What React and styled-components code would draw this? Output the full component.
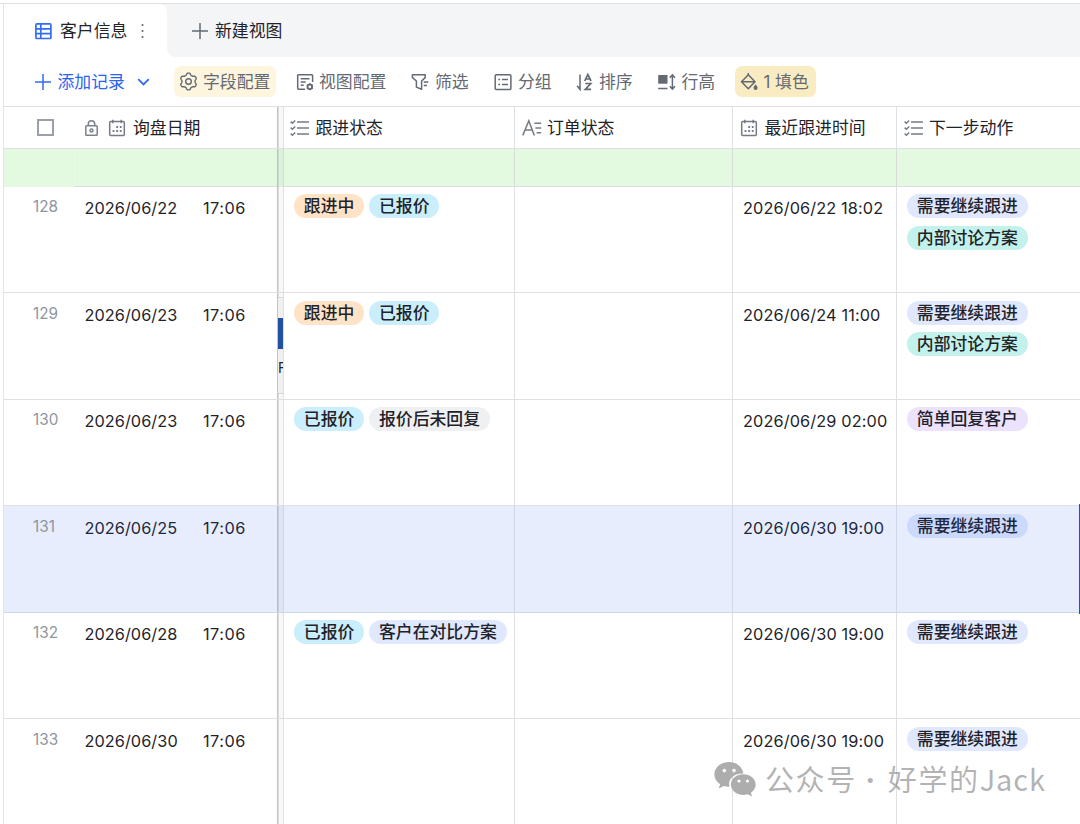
import React from 'react';
import styled, { createGlobalStyle, css } from 'styled-components';

const Global = createGlobalStyle`
  * { box-sizing: border-box; }
  html, body { margin: 0; padding: 0; background: #fff; }
  body {
    width: 1080px; height: 824px; overflow: hidden;
    font-family: Inter, "Noto Sans CJK SC", sans-serif;
    font-size: 16.85px; color: #1f2329;
  }
`;

const Page = styled.div`
  position: relative;
  width: 1080px;
  height: 824px;
  padding: 3px 0 0 3px;
  overflow: hidden;
`;
const Panel = styled.div`
  height: 821px;
  border-left: 1px solid #e3e4e6;
  display: flex;
  flex-direction: column;
`;
const TopLine = styled.div`
  height: 1px;
  margin-left: -4px;
  flex: none;
  background: #dfe0e2;
`;
const TabBar = styled.div`
  display: flex;
  height: 53px;
  flex: none;
  background: #f4f5f7;
`;
const iconText = css`
  padding-bottom: 2px;
  & > svg { margin-top: 2px; }
`;
const ActiveTab = styled.div`
  display: flex;
  align-items: center;
  width: 163px;
  padding-left: 30px;
  background: #fff;
  border-radius: 0 8px 0 0;
  ${iconText}
  span { margin-left: 8px; }
  svg:last-child { margin-left: 8px; }
`;
const NewTab = styled.div`
  display: flex;
  align-items: center;
  flex: 1;
  padding-left: 24px;
  background: #f4f5f7;
  position: relative;
  ${iconText}
  span { margin-left: 6px; }
  &::before {
    content: "";
    position: absolute;
    left: 0;
    bottom: 0;
    width: 8px;
    height: 8px;
    background: radial-gradient(circle at 8px 0, transparent 7.5px, #fff 8px);
  }
`;
const Toolbar = styled.div`
  display: flex;
  align-items: center;
  height: 49px;
  flex: none;
  padding-left: 30px;
  color: #646a73;
`;
const Tool = styled.div`
  display: flex;
  align-items: center;
  flex: none;
  gap: ${(p) => p.$gap ?? 5}px;
  width: ${(p) => p.$w}px;
  height: 31px;
  padding-left: ${(p) => (p.$bg ? 5 : 0)}px;
  margin-left: ${(p) => p.$ml || 0}px;
  border-radius: 7px;
  background: ${(p) => p.$bg || 'transparent'};
  color: ${(p) => p.$color || 'inherit'};
  white-space: nowrap;
  ${iconText}
`;

const columns = '273px 7px 231px 218px 164px 1fr';
const line = '#dee0e3';

const HeaderRow = styled.div`
  display: grid;
  grid-template-columns: ${columns};
  height: 43px;
  flex: none;
  border-top: 1px solid ${line};
  border-bottom: 1px solid ${line};
`;
const HeaderCell = styled.div`
  display: flex;
  align-items: center;
  padding-left: ${(p) => p.$pl}px;
  gap: ${(p) => p.$gap ?? 5}px;
  color: #1f2329;
  border-right: ${(p) => (p.$last ? 0 : 1)}px solid ${line};
  white-space: nowrap;
  ${iconText}
`;
const FrozenHeader = styled(HeaderCell)`
  border-right: 0;
  gap: 0;
`;
const Box = styled.div`
  width: 17px;
  height: 17px;
  border: 2px solid #9ba0a8;
  margin: 2px 30px 0 0;
`;
const Divider = styled.div`
  border-left: 1px solid #c2c3c6;
  border-right: 1px solid ${line};
  background: linear-gradient(90deg, #dcdddf 1px, #f8f8f9 1px);
  position: relative;
`;
const GroupRow = styled.div`
  display: grid;
  grid-template-columns: ${columns};
  height: 37.9px;
  flex: none;
  background: #e3f9e0;
`;
const GroupCell = styled.div`
  border-bottom: 1px solid #d9dde0;
  border-right: 1px solid #d5dfd8;
  margin-left: ${(p) => p.$indent || 0}px;
  &:last-child { border-right: 0; }
  ${(p) => p.$first && css`border-right: 0; border-left: 1px solid #e9fae7;`}
`;
const GroupDivider = styled(Divider)`
  background: linear-gradient(90deg, #cbdccb 1px, #def1dc 1px);
  border-left-color: #b5c6b6;
  border-right-color: #d0ddd1;
`;
const Cell = styled.div`
  display: flex;
  flex-wrap: wrap;
  align-content: flex-start;
  gap: 7.6px 5px;
  padding: 7.5px 0 0 10px;
  border-right: 1px solid ${line};
  overflow: hidden;
  &:last-child { border-right: 0; }
`;
const Row = styled.div`
  display: grid;
  grid-template-columns: ${columns};
  height: 106.5px;
  flex: none;
  background: ${(p) => (p.$selected ? '#e7edfd' : '#fff')};
  border-bottom: 1px solid ${(p) => (p.$selected ? '#ccd7ea' : line)};
  ${(p) => p.$selected && css`
    color: #1d2740;
    ${Divider} {
      background: linear-gradient(90deg, #c8d0e2 1px, #dfe5f5 1px);
      border-left-color: #b3bccf;
      border-right-color: #cdd6e8;
    }
    ${Cell} { border-right-color: #cfd8ea; }
  `}
`;
const Frozen = styled.div`
  display: grid;
  grid-template-columns: 80.4px 118.6px 1fr;
`;
const Num = styled.div`
  padding: 10.3px 0 0 29px;
  font-size: 15.3px;
  line-height: 20px;
  color: #8f959e;
`;
const Stamp = styled.div`
  padding-top: 11.6px;
  line-height: 20px;
  font-size: 16.3px;
  letter-spacing: ${(p) => p.$ls ?? 0.07}px;
  white-space: nowrap;
`;
const TimeCell = styled(Cell)`
  padding-top: 0;
`;
const tones = {
  orange: '#fee3c7',
  cyan: '#caeefc',
  gray: '#eff0f1',
  indigo: '#e0e8ff',
  teal: '#c2f2eb',
  purple: '#ece2fe',
  active: '#cad9fc',
};
const Tag = styled.span`
  height: 24px;
  line-height: 24px;
  padding: 0 9.8px;
  border-radius: 12px;
  font-weight: 500;
  white-space: nowrap;
  background: ${(p) => tones[p.$tone]};
`;
const Thumb = styled.div`
  position: absolute;
  left: 0;
  top: 4px;
  width: 5px;
  height: 97px;
  overflow: hidden;
  background: #f0f0f1;
  border: solid #d5d6d8;
  border-width: 1px 0;
  padding-top: 20px;
  font-size: 14px;
  line-height: 38px;
  &::before {
    content: "";
    display: block;
    width: 5px;
    height: 31px;
    background: #2450a4;
  }
`;
const Remote = styled.div`
  position: absolute;
  right: 0;
  top: 504px;
  width: 1px;
  height: 110px;
  background: #1f4fd0;
`;
const Watermark = styled.div`
  position: absolute;
  left: 714px;
  top: 756px;
  display: flex;
  align-items: center;
  height: 44px;
  color: rgba(120, 120, 120, 0.56);
  font-family: "Noto Sans CJK SC", sans-serif;
  font-weight: 400;
  font-size: 29px;
  white-space: nowrap;
  svg { margin-top: 2px; }
`;
const Mark = styled.span`
  letter-spacing: ${(p) => p.$ls}px;
  margin-left: ${(p) => p.$ml || 0}px;
`;
const MarkDot = styled.span`
  width: 27px;
  text-align: center;
  font-size: 24px;
`;

const Svg = ({ s = 18, w = s, c = '#646a73', sw = 1.5, children }) => (
  <svg width={w} height={s} viewBox={`0 0 ${w} ${s}`} fill="none" stroke={c} strokeWidth={sw} style={{ flex: 'none' }}>
    {children}
  </svg>
);
const GridIcon = () => (
  <Svg c="#336df4" sw={1.7}>
    <rect x="1.9" y="1.9" width="15" height="14.6" rx="1" />
    <path d="M6.8 2v14.4M2 6.8h15M2 11.7h15" />
  </Svg>
);
const Plus = ({ c = '#646a73' }) => (
  <Svg s={18} c={c}><path d="M9 1v16M1 9h16" /></Svg>
);
const Dots = () => (
  <svg width="16" height="18" fill="#646a73"><circle cx="7.5" cy="3" r="1.1" /><circle cx="7.5" cy="9" r="1.1" /><circle cx="7.5" cy="15" r="1.1" /></svg>
);
const gearPath = Array.from({ length: 96 }, (_, i) => {
  const a = (i * Math.PI) / 48;
  const r = 7.5 + 0.95 * Math.tanh(1.8 * Math.cos(6 * a));
  return `${i ? 'L' : 'M'}${(9.5 + r * Math.sin(a)).toFixed(2)} ${(9.5 - r * Math.cos(a)).toFixed(2)}`;
}).join('') + 'Z';
const Gear = () => (
  <Svg s={19} sw={1.4}>
    <path strokeLinejoin="round" d={gearPath} />
    <circle cx="9.5" cy="9.5" r="2.8" />
  </Svg>
);
const ViewConfig = () => (
  <Svg>
    <path d="M16.6 9V2.6a.9.9 0 0 0-.9-.9H2.6a.9.9 0 0 0-.9.9v12.7c0 .5.4.9.9.9H9M4.7 5.7h8.8M4.7 9h5M4.7 12.3h3" />
    <circle cx="13.8" cy="13.8" r="2.3" strokeWidth="1.8" />
    <path d="M13.8 10.3v1.2M13.8 16.1v1.2M10.8 12l1 .7M16 14.9l1 .6M16.8 12l-1 .7M11.8 14.9l-1 .6" strokeWidth="1.3" />
  </Svg>
);
const Filter = () => (
  <Svg><path strokeLinejoin="round" d="M1.4 1.8h12.8v2.8L10.6 8v8.3l-5.2-2.2V8L1.4 4.6zM12.7 9h4.6M12.7 12.4h3.3" /></Svg>
);
const Group = () => (
  <Svg><rect x="1.2" y="1.8" width="15.7" height="14.6" rx="1" /><path d="M4.3 6.5h1.9M8 6.5h6M4.3 11.5h1.9M8 11.5h6" /></Svg>
);
const Sort = () => (
  <Svg>
    <path d="M4 1.5V16.5L1.2 12.8" />
    <path d="M8.7 8 L11.8 1.5 L15 8M9.8 6h4M9.3 10.5h5.4L9.3 16.3h5.8" strokeWidth="1.7" />
  </Svg>
);
const RowHeight = () => (
  <Svg w={20}>
    <path d="M1.2 2h9.3v8.7H1.2z" fill="#646a73" stroke="none" />
    <path d="M1.2 15.5h9.3M15.4 2v14M12.8 4.7l2.6-2.8L18 4.7M12.8 13.3l2.6 2.8 2.6-2.8" />
  </Svg>
);
const Bucket = () => (
  <Svg w={19}>
    <path strokeLinejoin="round" d="M8.3 1.7 L15 8.8 L8.3 15.7 L1.5 8.8 Z M2 8.8H15M8.3 1.7V0" />
    <path d="M15.6 11.2c1.3 1.8 2 2.6 2 3.7a2 2 0 0 1-4 0c0-1.1.7-1.9 2-3.7z" fill="#646a73" stroke="none" />
  </Svg>
);
const Chevron = () => (
  <Svg w={14} s={10} c="#336df4" sw={1.9}><path d="M1.2 2.2l5.3 5.3 5.3-5.3" /></Svg>
);
const Lock = () => (
  <Svg w={15} c="#7b818a">
    <rect x="1.8" y="6.8" width="11.4" height="9.4" rx=".8" />
    <path d="M4.3 6.5V5a3.2 3.2 0 0 1 6.4 0v1.5" /><circle cx="7.5" cy="11.4" r="1.5" />
  </Svg>
);
const Calendar = () => (
  <Svg c="#757b84">
    <rect x="1.7" y="2.5" width="14.6" height="13.9" rx="1" />
    <path d="M4.8 .8v3.4M13.2 .8v3.4" />
    <path d="M8.2 8h1.8M11.8 8h1.8M4.6 12h1.8M8.2 12h1.8M11.8 12h1.8" strokeWidth="1.8" />
  </Svg>
);
const Checks = () => (
  <Svg w={19} c="#757b84">
    <path d="M7 3h12M7 9h12M7 15h12" />
    <path d="M.7 2.6 2.4 4.3 5.2 1.4M.7 8.6l1.7 1.7 2.8-2.9M.7 14.6l1.7 1.7 2.8-2.9" />
  </Svg>
);
const TextIcon = () => (
  <Svg w={20} c="#757b84">
    <path d="M.8 16.4 6.8 1.8 12.4 16.4M3 11h7.6M12.4 4.3h6.8M13.4 9h5.8M14.6 13.8h4.6" />
  </Svg>
);
const WeChat = () => (
  <svg width="42" height="36" viewBox="0 0 42 36">
    <path fill="#adadad" d="M15.2 1C7 1 .4 6.4.4 13.4c0 4 2.2 7.5 5.7 9.8L4.8 27.6l5-2.6c1.8.5 3.6.7 5.8.6-2.5-7.3 4.6-13.6 13.8-13.2C28.2 5.7 22.3 1 15.2 1z" />
    <path fill="#adadad" d="M29.3 13.2c-7 0-12.5 4.5-12.5 10.3s5.5 10.4 12.5 10.4c1.6 0 3.1-.2 4.5-.6l4.3 2.2-1.2-3.8c3-2 4.8-4.9 4.8-8.2 0-5.8-5.5-10.3-12.4-10.3z" />
    <g fill="#fff"><circle cx="10.3" cy="9.6" r="1.8" /><circle cx="20" cy="9.6" r="1.8" /><circle cx="25" cy="20" r="1.6" /><circle cx="33.5" cy="20" r="1.6" /></g>
  </svg>
);

const rows = [
  { n: 128, d: '2026/06/22', s: [['orange', '跟进中'], ['cyan', '已报价']], t: '2026/06/22 18:02', a: [['indigo', '需要继续跟进'], ['teal', '内部讨论方案']] },
  { n: 129, d: '2026/06/23', thumb: true, s: [['orange', '跟进中'], ['cyan', '已报价']], t: '2026/06/24 11:00', a: [['indigo', '需要继续跟进'], ['teal', '内部讨论方案']] },
  { n: 130, d: '2026/06/23', s: [['cyan', '已报价'], ['gray', '报价后未回复']], t: '2026/06/29 02:00', a: [['purple', '简单回复客户']] },
  { n: 131, d: '2026/06/25', selected: true, s: [], t: '2026/06/30 19:00', a: [['active', '需要继续跟进']] },
  { n: 132, d: '2026/06/28', s: [['cyan', '已报价'], ['indigo', '客户在对比方案']], t: '2026/06/30 19:00', a: [['indigo', '需要继续跟进']] },
  { n: 133, d: '2026/06/30', s: [], t: '2026/06/30 19:00', a: [['indigo', '需要继续跟进']] },
];
const Tags = ({ items }) => items.map(([tone, text]) => <Tag key={text} $tone={tone}>{text}</Tag>);

const Spacer = styled.span`
  width: ${(p) => p.$w}px;
  flex: none;
`;

export default function App() {
  return (
    <Page>
      <Global />
      <Panel>
        <TopLine />
        <TabBar>
          <ActiveTab><GridIcon /><span>客户信息</span><Dots /></ActiveTab>
          <NewTab><Plus /><span>新建视图</span></NewTab>
        </TabBar>
        <Toolbar>
          <Tool $w={140} $color="#2c64f0" $gap={5.5}>
            <Plus c="#336df4" />添加记录<Spacer $w={1} /><Chevron />
          </Tool>
          <Tool $w={102} $bg="#fef5de"><Gear />字段配置</Tool>
          <Tool $w={95} $ml={20}><ViewConfig />视图配置</Tool>
          <Tool $w={62} $ml={20} $gap={6}><Filter />筛选</Tool>
          <Tool $w={62} $ml={21} $gap={6}><Group />分组</Tool>
          <Tool $w={62} $ml={20}><Sort />排序</Tool>
          <Tool $w={62} $ml={19} $gap={4.5}><RowHeight />行高</Tool>
          <Tool $w={81} $ml={15.5} $bg="#faecc2"><Bucket />1 填色</Tool>
        </Toolbar>
        <HeaderRow>
          <FrozenHeader $pl={33}>
            <Box /><Lock /><Spacer $w={9} /><Calendar /><Spacer $w={7} />询盘日期
          </FrozenHeader>
          <Divider />
          <HeaderCell $pl={6} $gap={6.5}><Checks />跟进状态</HeaderCell>
          <HeaderCell $pl={7}><TextIcon />订单状态</HeaderCell>
          <HeaderCell $pl={7} $gap={6.5}><Calendar />最近跟进时间</HeaderCell>
          <HeaderCell $pl={7} $gap={6} $last><Checks />下一步动作</HeaderCell>
        </HeaderRow>
        <GroupRow>
          <GroupCell $first $indent={70} />
          <GroupDivider />
          <GroupCell /><GroupCell /><GroupCell /><GroupCell />
        </GroupRow>
        {rows.map((r) => (
          <Row key={r.n} $selected={r.selected}>
            <Frozen>
              <Num>{r.n}</Num>
              <Stamp>{r.d}</Stamp>
              <Stamp $ls={0.5}>17:06</Stamp>
            </Frozen>
            <Divider>{r.thumb && <Thumb>F</Thumb>}</Divider>
            <Cell><Tags items={r.s} /></Cell>
            <Cell />
            <TimeCell><Stamp $ls={0.12}>{r.t}</Stamp></TimeCell>
            <Cell><Tags items={r.a} /></Cell>
          </Row>
        ))}
      </Panel>
      <Remote />
      <Watermark>
        <WeChat />
        <Mark $ls={1.6} $ml={9}>公众号</Mark>
        <MarkDot>·</MarkDot>
        <Mark $ls={1.6} $ml={4}>好学的</Mark>
        <Mark $ls={0.9}>Jack</Mark>
      </Watermark>
    </Page>
  );
}
